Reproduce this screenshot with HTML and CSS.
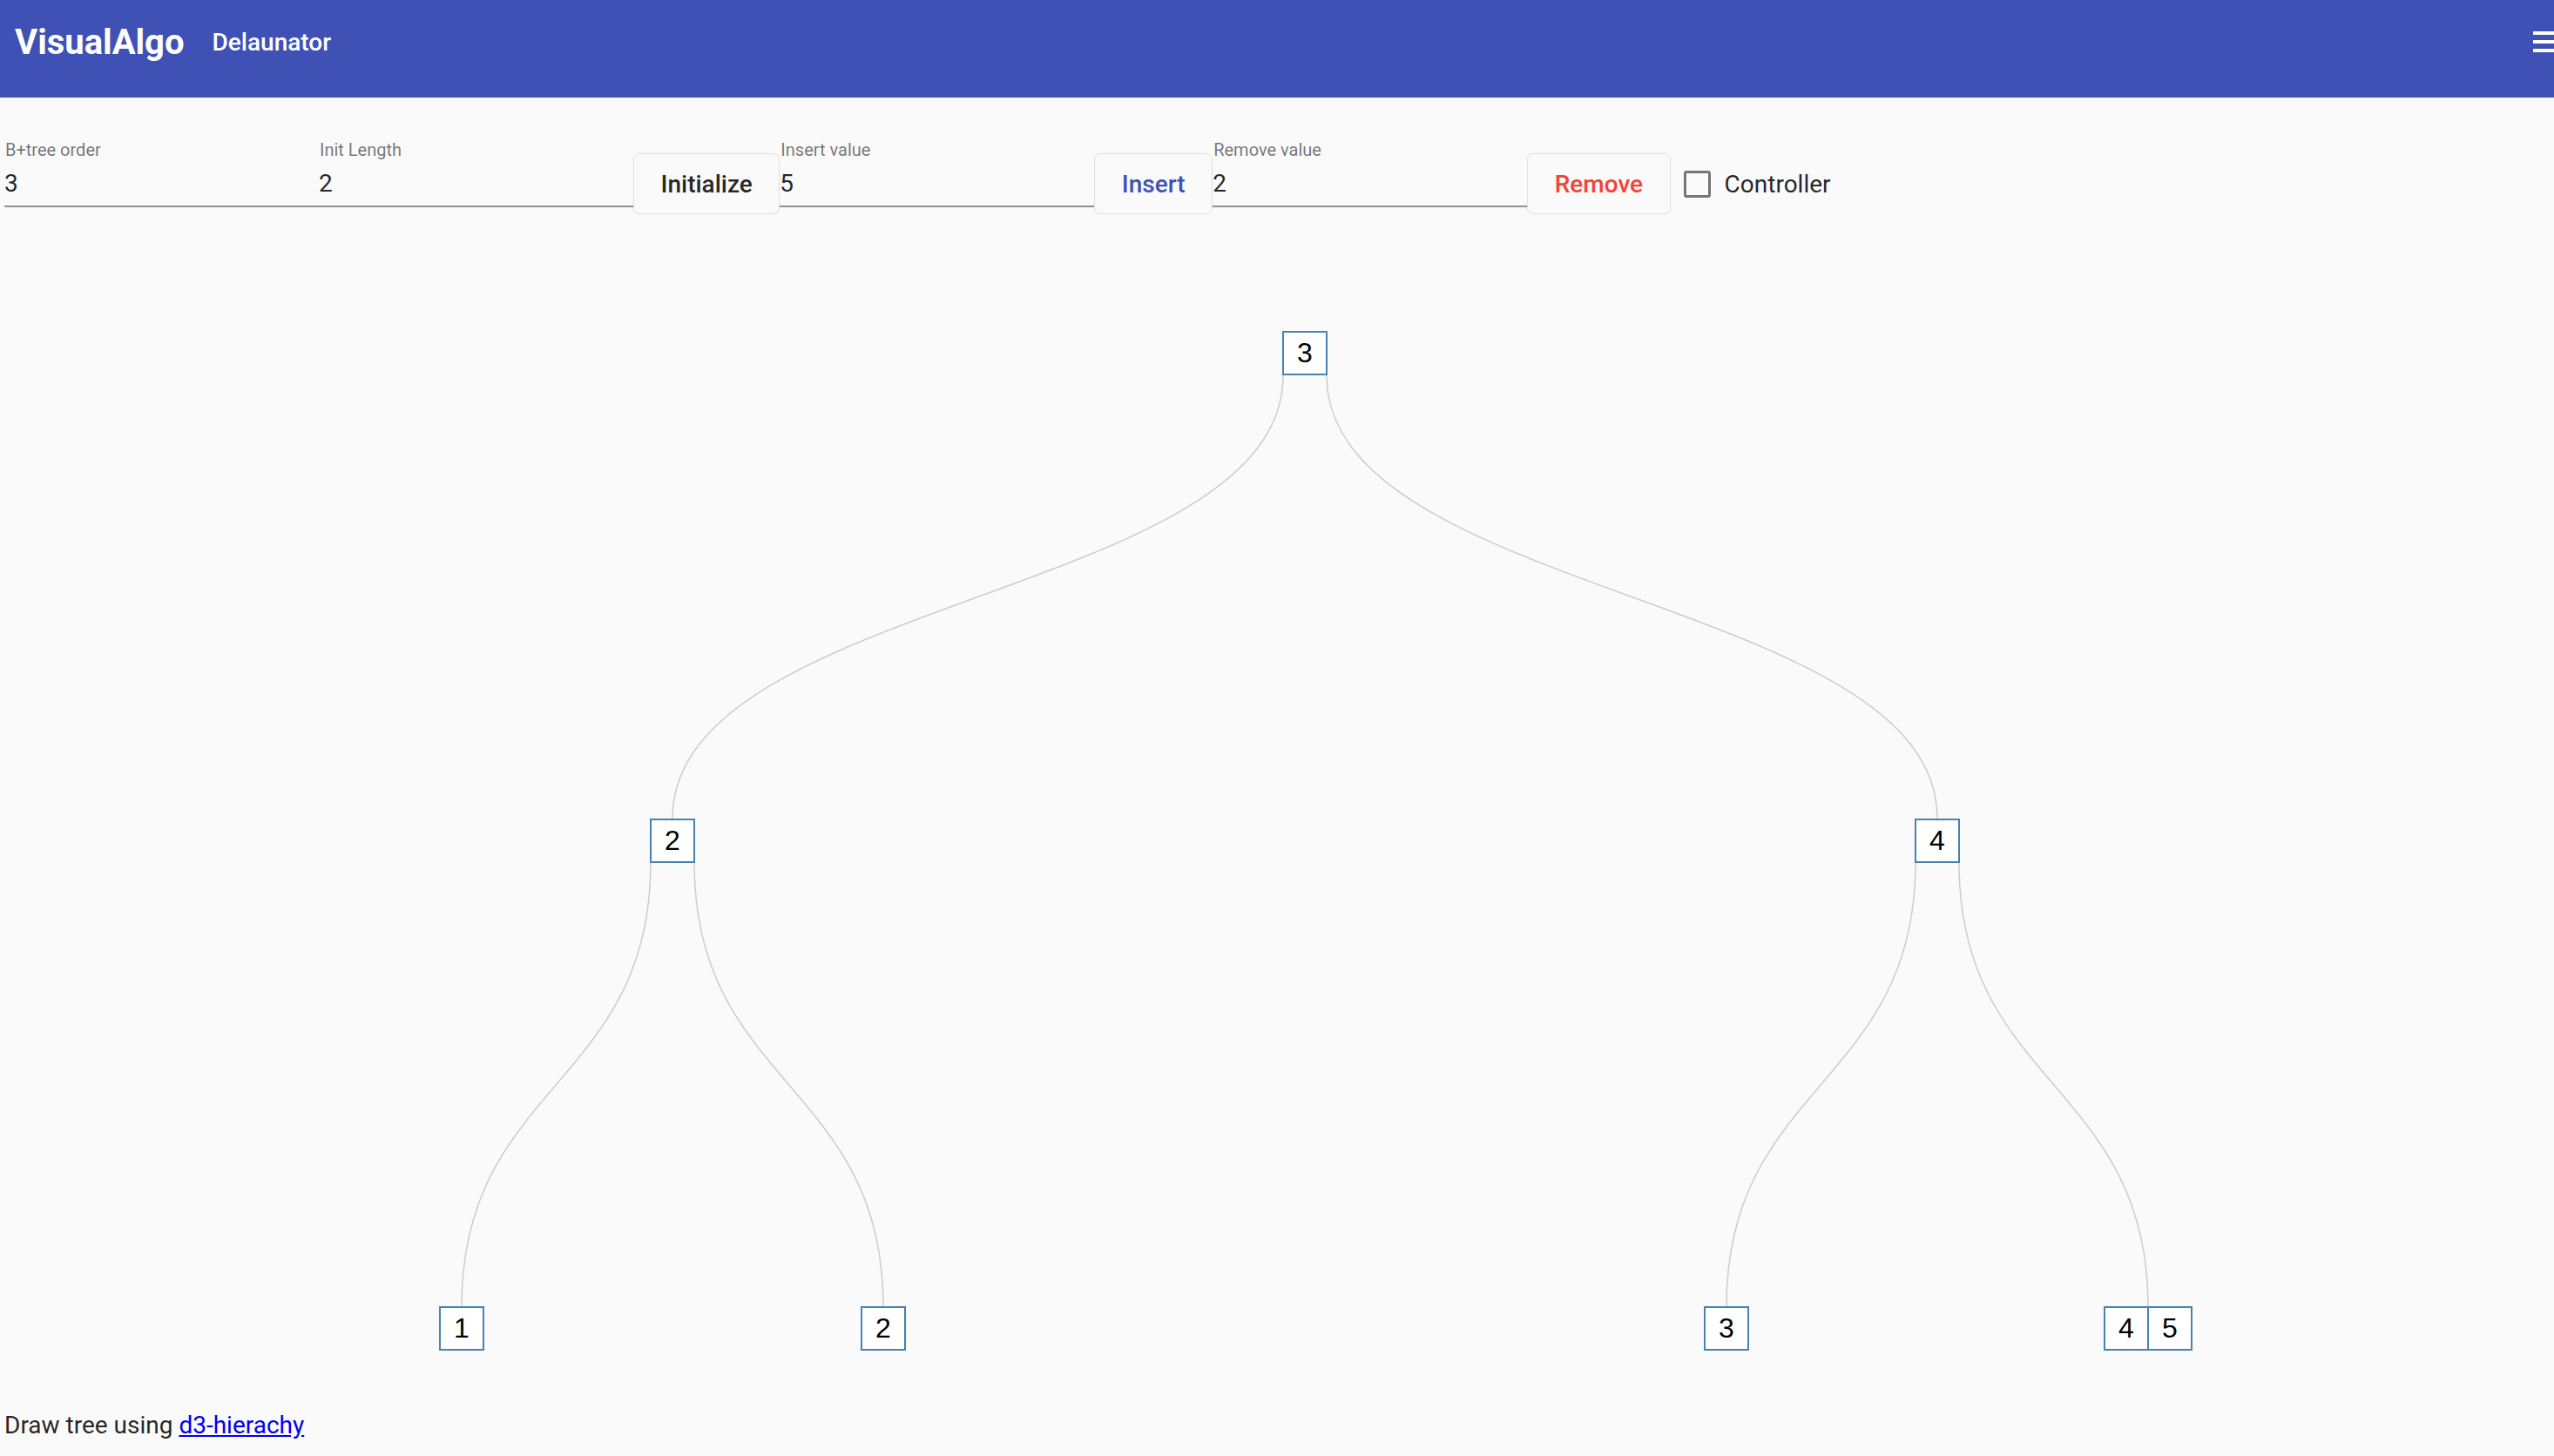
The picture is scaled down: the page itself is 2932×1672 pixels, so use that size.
FILE: index.html
```html
<!DOCTYPE html>
<html lang="en">
<head>
<meta charset="utf-8">
<title>VisualAlgo - B+tree</title>
<link rel="stylesheet" href="styles.css">
</head>
<body>
<header class="appbar">
  <div class="toolbar">
    <span class="brand">VisualAlgo</span>
    <span class="page-title">Delaunator</span>
    <span class="spacer"></span>
    <button class="menu-btn" type="button" aria-label="menu"><span></span><span></span><span></span></button>
  </div>
</header>
<main>
  <form class="controls">
    <label class="field"><span class="field-label">B+tree order</span><input class="field-input" type="text" value="3"></label>
    <label class="field"><span class="field-label">Init Length</span><input class="field-input" type="text" value="2"></label>
    <button class="btn btn-default" type="button">Initialize</button>
    <label class="field"><span class="field-label">Insert value</span><input class="field-input" type="text" value="5"></label>
    <button class="btn btn-primary" type="button">Insert</button>
    <label class="field"><span class="field-label">Remove value</span><input class="field-input" type="text" value="2"></label>
    <button class="btn btn-danger" type="button">Remove</button>
    <label class="check"><span class="check-box"></span><span class="check-text">Controller</span></label>
  </form>
  <svg class="tree" width="2932" height="1358" viewBox="0 0 2932 1358">
    <g class="links">
      <path d="M1473,172 C1473,426.5 772,426.5 772,681"/>
      <path d="M1523,172 C1523,426.5 2224,426.5 2224,681"/>
      <path d="M747,732 C747,986.5 530,986.5 530,1241"/>
      <path d="M797,732 C797,986.5 1014,986.5 1014,1241"/>
      <path d="M2199,732 C2199,986.5 1982,986.5 1982,1241"/>
      <path d="M2249,732 C2249,986.5 2466,986.5 2466,1241"/>
    </g>
    <g class="nodes">
      <rect x="1473" y="122" width="50" height="49"/><text x="1498" y="157">3</text>
      <rect x="747" y="682" width="50" height="49"/><text x="772" y="717">2</text>
      <rect x="2199" y="682" width="50" height="49"/><text x="2224" y="717">4</text>
      <rect x="505" y="1242" width="50" height="49"/><text x="530" y="1277">1</text>
      <rect x="989" y="1242" width="50" height="49"/><text x="1014" y="1277">2</text>
      <rect x="1957" y="1242" width="50" height="49"/><text x="1982" y="1277">3</text>
      <rect x="2416" y="1242" width="50" height="49"/><text x="2441" y="1277">4</text>
      <rect x="2466" y="1242" width="50" height="49"/><text x="2491" y="1277">5</text>
    </g>
  </svg>
  <p class="credit">Draw tree using <a href="#">d3-hierachy</a></p>
</main>
</body>
</html>
```
FILE: styles.css
```css
html, body {
  margin: 0;
  padding: 0;
  background: #fafafa;
  font-family: Roboto, "Liberation Sans", sans-serif;
  color: rgba(0, 0, 0, 0.87);
}

.appbar {
  background: #3f51b5;
  height: 112px;
  overflow: hidden;
  color: #fff;
}

.toolbar {
  display: flex;
  align-items: center;
  height: 96px;
  padding-left: 17px;
}

.brand {
  font-size: 40px;
  font-weight: 700;
  letter-spacing: 0;
}

.page-title {
  margin-left: 32px;
  font-size: 28px;
  font-weight: 500;
}

.spacer {
  flex: 1;
}

.menu-btn {
  display: flex;
  flex-direction: column;
  gap: 6px;
  width: 36px;
  margin-right: -12px;
  padding: 0;
  border: 0;
  background: transparent;
}

.menu-btn span {
  display: block;
  height: 4px;
  width: 36px;
  background: #fff;
}

.controls {
  display: flex;
  align-items: flex-start;
  padding: 48px 0 0 5px;
  margin: 0;
}

.field {
  display: flex;
  flex-direction: column;
  width: 361px;
  border-bottom: 2px solid #8f8f8f;
}

.field-label {
  font-size: 20px;
  line-height: 24px;
  color: rgba(0, 0, 0, 0.54);
  padding-left: 1px;
}

.field-input {
  margin-top: 7px;
  padding: 0 0 5px 0;
  border: 0;
  outline: none;
  background: transparent;
  font-family: Roboto, "Liberation Sans", sans-serif;
  font-size: 28px;
  line-height: 40px;
  height: 40px;
  box-sizing: content-box;
  color: rgba(0, 0, 0, 0.87);
}

.btn {
  margin-top: 16px;
  height: 70px;
  box-sizing: border-box;
  padding: 0 30.5px;
  border: 1px solid #dedede;
  border-radius: 7px;
  background: #fafafa;
  font-family: Roboto, "Liberation Sans", sans-serif;
  font-size: 28px;
  font-weight: 500;
}

.btn-default { color: rgba(0, 0, 0, 0.87); }
.btn-primary { color: #3f51b5; }
.btn-danger { color: #f44336; }

.check {
  display: flex;
  align-items: center;
  margin-top: 16px;
  height: 70px;
  margin-left: 15px;
}

.check-box {
  width: 31px;
  height: 31px;
  box-sizing: border-box;
  border: 3px solid #757575;
  border-radius: 3px;
}

.check-text {
  margin-left: 16px;
  font-size: 28px;
}

.tree {
  display: block;
  margin-top: 13px;
}

.links path {
  fill: none;
  stroke: #cccccc;
  stroke-width: 1.5;
}

.nodes rect {
  fill: #ffffff;
  stroke: #4682b4;
  stroke-width: 2;
}

.nodes text {
  font-family: "Liberation Sans", Arial, sans-serif;
  font-size: 32px;
  text-anchor: middle;
  fill: #000;
}

.credit {
  margin: 0;
  padding-left: 5px;
  font-size: 28px;
  line-height: 39px;
}

.credit a {
  color: #0000ee;
}
```
